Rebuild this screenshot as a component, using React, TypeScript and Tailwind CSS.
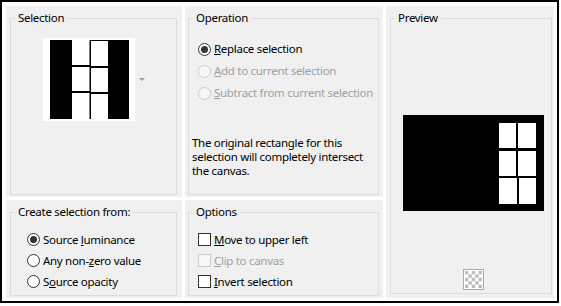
import React from 'react'

const font = { fontFamily: '"Noto Sans", "Open Sans", sans-serif' }

function Group({ label, className, children }: { label: string; className?: string; children?: React.ReactNode }) {
  return (
    <fieldset className={`border border-[#dcdcdc] min-w-0 ${className ?? ''}`}>
      <legend className="px-[3px] ml-[4px] text-[11.5px] tracking-[-0.3px] leading-[16px] text-black whitespace-nowrap">{label}</legend>
      {children}
    </fieldset>
  )
}

function Radio({ checked, disabled, children }: { checked?: boolean; disabled?: boolean; children: React.ReactNode }) {
  return (
    <div className="flex items-center h-[21px]">
      <span
        className={`w-[13px] h-[13px] rounded-full border flex items-center justify-center shrink-0 ${
          disabled ? 'border-[#cccccc] bg-[#f7f7f7]' : 'border-[#333333] bg-white'
        }`}
      >
        {checked && <span className="w-[7px] h-[7px] rounded-full bg-[#333333]" />}
      </span>
      <span className={`ml-[3px] text-[11.5px] tracking-[-0.3px] whitespace-nowrap ${disabled ? 'text-[#a0a0a0]' : 'text-black'}`}>{children}</span>
    </div>
  )
}

function Check({ disabled, children }: { disabled?: boolean; children: React.ReactNode }) {
  return (
    <div className="flex items-center h-[21px]">
      <span
        className={`w-[13px] h-[13px] border shrink-0 ${
          disabled ? 'border-[#cccccc] bg-[#f7f7f7]' : 'border-[#333333] bg-white'
        }`}
      />
      <span className={`ml-[3px] text-[11.5px] tracking-[-0.3px] whitespace-nowrap ${disabled ? 'text-[#a0a0a0]' : 'text-black'}`}>{children}</span>
    </div>
  )
}

function Thumb() {
  return (
    <svg width="92" height="83" viewBox="0 0 92 83">
      <rect width="92" height="83" fill="#fff" />
      <rect x="7" y="2" width="22" height="79" fill="#000" />
      <rect x="65" y="2" width="21" height="79" fill="#000" />
      <rect x="46.5" y="2" width="1.5" height="79" fill="#000" />
      <rect x="47" y="2" width="18" height="1" fill="#000" />
      <rect x="29" y="27" width="18" height="2" fill="#000" />
      <rect x="47" y="28" width="18" height="2" fill="#000" />
      <rect x="29" y="53" width="18" height="2" fill="#000" />
      <rect x="47" y="54" width="18" height="2" fill="#000" />
    </svg>
  )
}

function PreviewImg() {
  return (
    <svg width="141" height="96" viewBox="0 0 141 96">
      <rect width="141" height="96" fill="#000" />
      <rect x="96" y="8" width="17" height="25" fill="#fff" />
      <rect x="115" y="8" width="18" height="25" fill="#fff" />
      <rect x="96" y="36" width="17" height="25" fill="#fff" />
      <rect x="115" y="36" width="18" height="25" fill="#fff" />
      <rect x="96" y="63" width="18" height="26" fill="#fff" />
      <rect x="116" y="63" width="17" height="26" fill="#fff" />
    </svg>
  )
}

function Checker() {
  const cells = []
  for (let r = 0; r < 5; r++) {
    for (let c = 0; c < 5; c++) {
      if ((r + c) % 2 === 0) cells.push(<rect key={`${r}-${c}`} x={2 + c * 3.4} y={2 + r * 3.4} width="3.4" height="3.4" fill="#bdbdbd" />)
    }
  }
  return (
    <svg width="21" height="21" viewBox="0 0 21 21">
      <rect x="0.5" y="0.5" width="20" height="20" fill="#fff" stroke="#a8a8a8" />
      {cells}
    </svg>
  )
}

export default function App() {
  return (
    <div className="w-[561px] h-[306px] bg-white" style={font}>
      <div className="w-[559px] h-[303px] border-2 border-black bg-white p-[4px]">
        <div className="grid grid-cols-[176px_198px_168px] grid-rows-[191px_98px] gap-[3px] h-full">
          {/* Selection */}
          <div className="bg-[#f0f0f0] pt-[4px] pl-[4px] pr-[5px] pb-[2px] flex">
            <Group label="Selection" className="flex-1">
              <div className="flex items-center mt-[12px] ml-[32px]">
                <Thumb />
                <svg width="6" height="4" viewBox="0 0 6 4" className="ml-[4px]">
                  <path d="M0 0 L6 0 L3 3 Z" fill="#a0a0a0" />
                </svg>
              </div>
            </Group>
          </div>

          {/* Operation */}
          <div className="bg-[#f0f0f0] pt-[4px] pl-[3px] pr-[4px] pb-[2px] flex">
            <Group label="Operation" className="flex-1">
              <div className="mt-[12px] pl-[9px] flex flex-col">
                <div className="h-[22px] flex items-center"><Radio checked><u>R</u>eplace selection</Radio></div>
                <div className="h-[22px] flex items-center"><Radio disabled><u>A</u>dd to current selection</Radio></div>
                <div className="h-[22px] flex items-center"><Radio disabled><u>S</u>ubtract from current selection</Radio></div>
              </div>
              <p className="mt-[32px] pl-[3px] text-[11.5px] tracking-[-0.3px] leading-[14px] text-black whitespace-nowrap">
                The original rectangle for this<br />
                selection will completely intersect<br />
                the canvas.
              </p>
            </Group>
          </div>

          {/* Preview */}
          <div className="row-span-2 bg-[#f0f0f0] pt-[4px] pl-[4px] pr-[2px] pb-[4px] flex">
            <Group label="Preview" className="flex-1">
              <div className="mt-[89px] ml-[12px]">
                <PreviewImg />
              </div>
              <div className="mt-[58px] ml-[72px]">
                <Checker />
              </div>
            </Group>
          </div>

          {/* Create selection from */}
          <div className="bg-[#f0f0f0] pt-[4px] pl-[4px] pr-[5px] pb-[2px] flex">
            <Group label="Create selection from:" className="flex-1">
              <div className="mt-[9px] pl-[16px] flex flex-col">
                <Radio checked>Source <u>l</u>uminance</Radio>
                <Radio>Any non-<u>z</u>ero value</Radio>
                <Radio>S<u>o</u>urce opacity</Radio>
              </div>
            </Group>
          </div>

          {/* Options */}
          <div className="bg-[#f0f0f0] pt-[4px] pl-[3px] pr-[4px] pb-[2px] flex">
            <Group label="Options" className="flex-1">
              <div className="mt-[9px] pl-[9px] flex flex-col">
                <Check><u>M</u>ove to upper left</Check>
                <Check disabled><u>C</u>lip to canvas</Check>
                <Check><u>I</u>nvert selection</Check>
              </div>
            </Group>
          </div>
        </div>
      </div>
    </div>
  )
}
